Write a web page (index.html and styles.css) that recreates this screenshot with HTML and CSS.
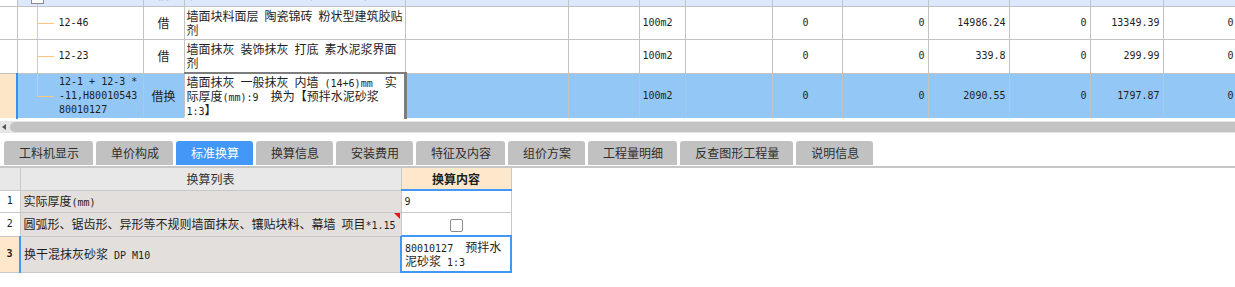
FILE: index.html
```html
<!DOCTYPE html>
<html lang="zh-CN">
<head>
    <meta charset="UTF-8">
    <meta name="viewport" content="width=device-width, initial-scale=1.0">
    <title>标准换算</title>
    <link rel="stylesheet" href="styles.css">
</head>
<body>
    <div class="sheet">
        <table class="grid">
            <colgroup>
                <col class="c-ind"><col class="c-code"><col class="c-type"><col class="c-name">
                <col class="c-spec"><col class="c-x1"><col class="c-unit"><col class="c-q1">
                <col class="c-q2"><col class="c-p1"><col class="c-p2"><col class="c-p3">
                <col class="c-p4"><col class="c-p5">
            </colgroup>
            <tr class="r0">
                <td class="ind"></td>
                <td class="code"><span class="node"></span></td>
                <td class="type"><span class="peek">借</span></td>
                <td class="name"><span class="peek">墙面抹灰&ensp;一般抹灰&ensp;外墙&ensp;混凝土墙</span></td>
                <td></td><td></td><td></td><td></td><td></td><td></td><td></td><td></td><td></td><td></td>
            </tr>
            <tr class="r1">
                <td class="ind"></td>
                <td class="code m">12-46</td>
                <td class="type">借</td>
                <td class="name">墙面块料面层&ensp;陶瓷锦砖&ensp;粉状型建筑胶贴<br>剂</td>
                <td></td>
                <td></td>
                <td class="unit m">100m2</td>
                <td></td>
                <td class="num far m">0</td>
                <td class="num m">0</td>
                <td class="num m">14986.24</td>
                <td class="num m">0</td>
                <td class="num m">13349.39</td>
                <td class="num m">0</td>
            </tr>
            <tr class="r1">
                <td class="ind"></td>
                <td class="code m">12-23</td>
                <td class="type">借</td>
                <td class="name">墙面抹灰&ensp;装饰抹灰&ensp;打底&ensp;素水泥浆界面<br>剂</td>
                <td></td>
                <td></td>
                <td class="unit m">100m2</td>
                <td></td>
                <td class="num far m">0</td>
                <td class="num m">0</td>
                <td class="num m">339.8</td>
                <td class="num m">0</td>
                <td class="num m">299.99</td>
                <td class="num m">0</td>
            </tr>
            <tr class="sel">
                <td class="ind"></td>
                <td class="code last m">12-1 + 12-3 *<br>-11,H80010543<br>80010127</td>
                <td class="type">借换</td>
                <td class="name edit">墙面抹灰&ensp;一般抹灰&ensp;内墙&ensp;<span class="m">(14+6)mm</span>&ensp;&ensp;实<br>际厚度<span class="m">(mm):9</span>&ensp;&ensp;换为【预拌水泥砂浆<br><span class="m">1:3</span>】</td>
                <td></td>
                <td></td>
                <td class="unit m">100m2</td>
                <td></td>
                <td class="num far m">0</td>
                <td class="num m">0</td>
                <td class="num m">2090.55</td>
                <td class="num m">0</td>
                <td class="num m">1797.87</td>
                <td class="num m">0</td>
            </tr>
        </table>
    </div>

    <div class="hscroll">
        <span class="arrow"></span>
        <span class="thumb"></span>
    </div>

    <div class="tabs">
        <div class="tab">工料机显示</div>
        <div class="tab">单价构成</div>
        <div class="tab active">标准换算</div>
        <div class="tab">换算信息</div>
        <div class="tab">安装费用</div>
        <div class="tab">特征及内容</div>
        <div class="tab">组价方案</div>
        <div class="tab">工程量明细</div>
        <div class="tab">反查图形工程量</div>
        <div class="tab">说明信息</div>
    </div>

    <div class="panel">
        <table class="list">
            <colgroup>
                <col class="l-no"><col class="l-name"><col class="l-val">
            </colgroup>
            <tr class="head">
                <th class="no"></th>
                <th class="title">换算列表</th>
                <th class="val">换算内容</th>
            </tr>
            <tr class="h22">
                <td class="no m">1</td>
                <td class="item">实际厚度<span class="m">(mm)</span></td>
                <td class="input m">9</td>
            </tr>
            <tr class="h23">
                <td class="no m">2</td>
                <td class="item flag">圆弧形、锯齿形、异形等不规则墙面抹灰、镶贴块料、幕墙&ensp;项目<span class="m">*1.15</span></td>
                <td class="input center"><span class="check"></span></td>
            </tr>
            <tr class="h35">
                <td class="no cur m">3</td>
                <td class="item cur-item">换干混抹灰砂浆<span class="m"> DP M10</span></td>
                <td class="input focus"><span class="m">80010127&nbsp;&nbsp;</span>预拌水<br>泥砂浆<span class="m"> 1:3</span></td>
            </tr>
        </table>
    </div>
</body>
</html>
```

FILE: styles.css
```css
body {
    margin: 0;
    background: #fff;
    font-family: "Noto Sans CJK SC", sans-serif;
    font-size: 12px;
    color: #1e1e1e;
    overflow: hidden;
}
.m {
    font-family: "DejaVu Sans Mono", "Noto Sans CJK SC", monospace;
    font-size: 10px;
}
span.m {
    line-height: 10px;
}

/* top grid */
.sheet {
    width: 1235px;
    overflow: hidden;
}
.grid {
    border-collapse: collapse;
    table-layout: fixed;
    width: 1237px;
}
.c-ind { width: 17px; }
.c-code { width: 126px; }
.c-type { width: 41px; }
.c-name { width: 221px; }
.c-spec { width: 163px; }
.c-x1 { width: 71px; }
.c-unit { width: 46px; }
.c-q1 { width: 87px; }
.c-q2 { width: 70px; }
.c-p1 { width: 86px; }
.c-p2 { width: 81px; }
.c-p3 { width: 81px; }
.c-p4 { width: 73px; }
.c-p5 { width: 74px; }

.grid td {
    border: 1px solid #c3c3c3;
    padding: 0 2px;
    line-height: 14px;
    vertical-align: middle;
    white-space: nowrap;
    overflow: hidden;
}
.grid td:first-child {
    border-left: 0;
}
.grid .r0 td {
    border-top: 0;
    height: 6px;
    line-height: 6px;
    background: #dce8fb;
}
.grid .r0 td.ind {
    background: #fff;
}
.peek {
    position: relative;
    top: -9px;
}
.grid .r1 td {
    height: 32px;
}
.grid .sel td {
    height: 43px;
    background: #93c8f6;
    border-bottom-color: #fff;
}
.grid .sel td.ind {
    background: #fde6c8;
    border-right: 2px solid #3a8fe9;
}
.grid .sel td.edit {
    background: #fff;
    border: 2px solid #7d7d7d;
    border-left-width: 1px;
    border-right-width: 3px;
    border-bottom-color: #fff;
}

.code {
    position: relative;
    padding-left: 41px !important;
}
.code::before {
    content: "";
    position: absolute;
    left: 19px;
    top: 0;
    bottom: 0;
    border-left: 1px solid #fbc67c;
}
.code::after {
    content: "";
    position: absolute;
    left: 19px;
    top: 50%;
    width: 17px;
    border-top: 1px solid #fbc67c;
}
.code.last::before {
    bottom: 50%;
}
.r0 .code::after {
    display: none;
}
.node {
    position: absolute;
    left: 13px;
    top: -8px;
    width: 11px;
    height: 10px;
    border: 1px solid #8c8c8c;
    background: #fff;
}
.type {
    text-align: center;
}
.unit {
    padding-left: 3px !important;
}
.num {
    text-align: right;
    padding-right: 3px !important;
}
.num.far {
    padding-right: 33px !important;
}

/* scrollbar */
.hscroll {
    display: flex;
    align-items: center;
    height: 12px;
    margin-top: 2px;
    background: #e6e6e6;
}
.hscroll .arrow {
    width: 0;
    height: 0;
    border-top: 3px solid transparent;
    border-bottom: 3px solid transparent;
    border-right: 4px solid #555;
    margin: 0 4px 0 2px;
}
.hscroll .thumb {
    flex: 1;
    height: 10px;
    background: #c3c3c3;
    border-radius: 5px 0 0 5px;
}

/* tabs */
.tabs {
    display: flex;
    gap: 3px;
    padding-left: 4px;
    margin-top: 8px;
}
.tab {
    height: 24px;
    line-height: 24px;
    padding: 0 14px 0 15px;
    background: #c1c1c1;
    color: #2e2e2e;
    border-radius: 3px 3px 0 0;
}
.tab.active {
    background: #4297f7;
    color: #fff;
}

/* bottom list */
.panel {
    margin-top: 1px;
    border-top: 2px solid #c6c6c6;
}
.list {
    border-collapse: collapse;
    table-layout: fixed;
    width: 511px;
}
.l-no { width: 20px; }
.l-name { width: 381px; }
.l-val { width: 110px; }
.list th,
.list td {
    border: 1px solid #c8c8c8;
    padding: 0 3px;
    line-height: 14px;
    white-space: nowrap;
    vertical-align: middle;
}
.list th:first-child,
.list td:first-child {
    border-left: 0;
}
.list th {
    border-top: 0;
    height: 21px;
    font-weight: normal;
    color: #333;
    background: #e8e8e8;
}
.list th.val {
    background: #fde8cb;
    font-weight: bold;
    color: #1e1e1e;
    border-bottom: 2px solid #4297f7;
}
.list .h22 td { height: 21px; }
.list .h23 td { height: 22px; }
.list .h35 td { height: 34px; }
.list td.no {
    text-align: center;
    padding: 0;
}
.list td.cur {
    background: #fde8cb;
    font-weight: bold;
    border-right: 2px solid #4297f7;
}
.list td.item {
    background: #e3dfdc;
}
.list td.input {
    background: #fff;
}
.list td.center {
    text-align: center;
}
.list td.focus {
    border: 2px solid #4297f7;
}
.flag {
    position: relative;
}
.flag::after {
    content: "";
    position: absolute;
    top: 0;
    right: 1px;
    border-top: 6px solid #e8141a;
    border-left: 6px solid transparent;
}
.check {
    display: inline-block;
    width: 11px;
    height: 11px;
    border: 1px solid #8a8a8a;
    border-radius: 2px;
    background: #fff;
    vertical-align: middle;
}
```
